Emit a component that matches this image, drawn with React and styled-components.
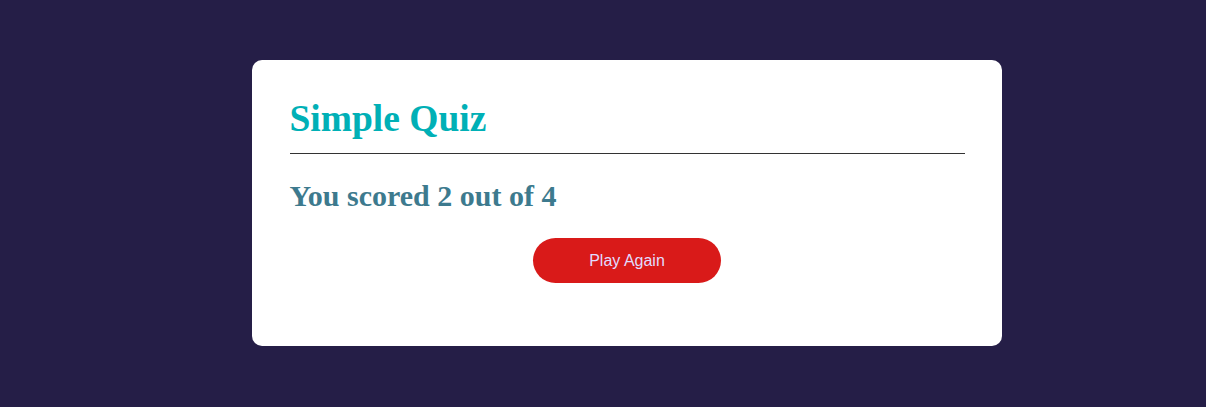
import React from "react";
import styled, { createGlobalStyle } from "styled-components";

const GlobalStyle = createGlobalStyle`
  html, body {
    margin: 0;
    padding: 0;
    background-color: #251e47;
  }
  body {
    font-family: "Liberation Serif", "Times New Roman", serif;
  }
`;

const Page = styled.div`
  min-height: 407px;
  display: flex;
  justify-content: center;
  align-items: flex-start;
  padding: 60px 0 0 48px;
  box-sizing: border-box;
`;

const Card = styled.div`
  width: 750px;
  box-sizing: border-box;
  background: #fff;
  border-radius: 10px;
  padding: 37px 37.5px 63px;
`;

const Title = styled.h1`
  margin: 0;
  padding-bottom: 13px;
  font-size: 37.5px;
  font-weight: bold;
  color: #00b0b6;
  border-bottom: 1px solid #333;
`;

const Score = styled.h2`
  margin: 25px 0 25px;
  font-size: 30px;
  font-weight: bold;
  color: #3d7a8e;
`;

const Actions = styled.div`
  display: flex;
  justify-content: center;
`;

const Button = styled.button`
  width: 188px;
  height: 45px;
  border: none;
  border-radius: 23px;
  background-color: #d91a19;
  color: #e2dcff;
  font-family: "Liberation Sans", Arial, sans-serif;
  font-size: 16px;
  cursor: pointer;
`;

export default function App() {
  return (
    <>
      <GlobalStyle />
      <Page>
        <Card>
          <Title>Simple Quiz</Title>
          <Score>You scored 2 out of 4</Score>
          <Actions>
            <Button type="button">Play Again</Button>
          </Actions>
        </Card>
      </Page>
    </>
  );
}
